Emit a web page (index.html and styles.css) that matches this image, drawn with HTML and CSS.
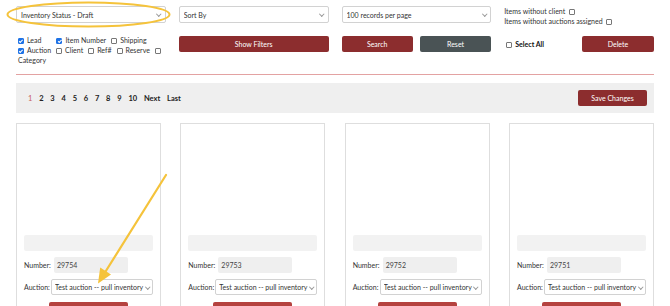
FILE: index.html
```html
<!DOCTYPE html>
<html lang="en">
<head>
<meta charset="utf-8">
<title>Inventory</title>
<link rel="stylesheet" href="styles.css">
</head>
<body>
<div class="page">
  <div class="filters">
    <div class="sel"><select><option>Inventory Status - Draft</option></select></div>
    <div class="sel"><select><option>Sort By</option></select></div>
    <div class="sel"><select><option>100 records per page</option></select></div>
    <div class="flags">
      <label class="flag">Items without client <input type="checkbox"></label>
      <label class="flag">Items without auctions assigned <input type="checkbox"></label>
    </div>

    <div class="fields">
      <label class="fld wide"><input type="checkbox" checked>Lead</label><label class="fld"><input type="checkbox" checked>Item Number</label><label class="fld"><input type="checkbox">Shipping</label>
      <label class="fld"><input type="checkbox" checked>Auction</label><label class="fld"><input type="checkbox">Client</label><label class="fld"><input type="checkbox">Ref#</label><label class="fld"><input type="checkbox">Reserve</label><label class="fld"><input type="checkbox">Category</label>
    </div>
    <div class="btnrow"><button class="btn red full">Show Filters</button></div>
    <div class="btnrow two"><button class="btn red">Search</button><button class="btn dark">Reset</button></div>
    <div class="btnrow split">
      <label class="selall"><input type="checkbox">Select All</label>
      <button class="btn red del">Delete</button>
    </div>
  </div>

  <hr class="rule">

  <div class="pager">
    <nav class="pages">
      <a class="cur">1</a><a>2</a><a>3</a><a>4</a><a>5</a><a>6</a><a>7</a><a>8</a><a>9</a><a>10</a><a>Next</a><a>Last</a>
    </nav>
    <button class="btn red save">Save Changes</button>
  </div>

  <div class="cards">
    <div class="card">
      <div class="photo"></div>
      <div class="caption"></div>
      <div class="row"><span class="lbl num">Number:</span><span class="numbox">29754</span></div>
      <div class="row"><span class="lbl auc">Auction:</span><div class="sel small"><select><option>Test auction -- pull inventory</option></select></div></div>
      <div class="cardbtn"><button class="btn lred"></button></div>
    </div>
    <div class="card">
      <div class="photo"></div>
      <div class="caption"></div>
      <div class="row"><span class="lbl num">Number:</span><span class="numbox">29753</span></div>
      <div class="row"><span class="lbl auc">Auction:</span><div class="sel small"><select><option>Test auction -- pull inventory</option></select></div></div>
      <div class="cardbtn"><button class="btn lred"></button></div>
    </div>
    <div class="card">
      <div class="photo"></div>
      <div class="caption"></div>
      <div class="row"><span class="lbl num">Number:</span><span class="numbox">29752</span></div>
      <div class="row"><span class="lbl auc">Auction:</span><div class="sel small"><select><option>Test auction -- pull inventory</option></select></div></div>
      <div class="cardbtn"><button class="btn lred"></button></div>
    </div>
    <div class="card">
      <div class="photo"></div>
      <div class="caption"></div>
      <div class="row"><span class="lbl num">Number:</span><span class="numbox">29751</span></div>
      <div class="row"><span class="lbl auc">Auction:</span><div class="sel small"><select><option>Test auction -- pull inventory</option></select></div></div>
      <div class="cardbtn"><button class="btn lred"></button></div>
    </div>
  </div>

  <svg class="annot" width="670" height="306" viewBox="0 0 670 306">
    <ellipse cx="88.5" cy="14.5" rx="81" ry="12" fill="none" stroke="#f5c33b" stroke-width="2"/>
    <line x1="166" y1="175" x2="104" y2="274" stroke="#f5c33b" stroke-width="2.2" stroke-linecap="round"/>
    <polygon points="98,283.5 111,274.5 100.2,267.5" fill="#f5c33b"/>
  </svg>
</div>
</body>
</html>
```

FILE: styles.css
```css
html, body {
  margin: 0;
  padding: 0;
  overflow: hidden;
  background: #fff;
}
body {
  font-family: Lato, "Liberation Sans", sans-serif;
  font-size: 7px;
  color: #333;
}
.page {
  position: relative;
  width: 670px;
  height: 306px;
  padding: 6px 16px 0;
  box-sizing: border-box;
}
.filters {
  display: grid;
  grid-template-columns: repeat(4, 1fr);
  grid-template-rows: 20px 30px;
  column-gap: 13px;
  row-gap: 9px;
}
.sel {
  position: relative;
  align-self: start;
}
.sel select {
  appearance: none;
  -webkit-appearance: none;
  display: block;
  width: 100%;
  height: 17px;
  margin: 0;
  padding: 0 8px 0 4px;
  border: 1px solid #d2d2d2;
  border-radius: 2px;
  background: #fff;
  font-family: inherit;
  font-size: 7px;
  color: #333;
  box-sizing: border-box;
}
.sel::after {
  content: "";
  position: absolute;
  right: 5px;
  top: 6px;
  width: 2.5px;
  height: 2.5px;
  border-right: 1px solid #999;
  border-bottom: 1px solid #999;
  transform: rotate(45deg);
}
.sel.small {
  flex: 1;
  align-self: center;
}
.sel.small select {
  height: 16px;
  padding: 0 6px 0 3px;
}
.sel.small::after {
  top: 5.5px;
  right: 4px;
}
input[type=checkbox] {
  appearance: none;
  -webkit-appearance: none;
  position: relative;
  width: 6px;
  height: 6px;
  margin: 0;
  border: 1px solid #777;
  border-radius: 1px;
  background: #fff;
  vertical-align: -0.5px;
  box-sizing: border-box;
}
input[type=checkbox]:checked {
  background: #1f73e6;
  border-color: #1f73e6;
}
input[type=checkbox]:checked::after {
  content: "";
  position: absolute;
  left: 1.3px;
  top: 0;
  width: 1.3px;
  height: 2.6px;
  border-right: 1px solid #fff;
  border-bottom: 1px solid #fff;
  transform: rotate(45deg);
}
.flags {
  display: flex;
  flex-direction: column;
  line-height: 10px;
}
.flag input {
  margin-left: 2px;
}
.fields {
  line-height: 10px;
  padding-left: 2px;
}
.fld {
  white-space: nowrap;
  margin-right: 5px;
}
.fld input {
  margin-right: 3px;
}
.fld.wide {
  margin-right: 15px;
}
.fields .fld:last-child {
  white-space: normal;
}
.btnrow {
  display: flex;
  align-items: flex-start;
  padding-top: 1px;
}
.btnrow.two {
  gap: 7px;
}
.btnrow.two .btn {
  flex: 1;
}
.btnrow.split {
  justify-content: space-between;
}
.btn {
  display: block;
  height: 16px;
  margin: 0;
  padding: 0;
  border: none;
  border-radius: 2px;
  font-family: inherit;
  font-size: 7px;
  color: #fff;
  cursor: pointer;
}
.btn.full {
  width: 100%;
}
.red {
  background: #8c2d2e;
}
.dark {
  background: #4a5355;
}
.lred {
  background: #b5423f;
}
.selall {
  font-weight: 700;
  color: #111;
  line-height: 16px;
  padding-left: 2px;
}
.selall input {
  margin-right: 3px;
}
.del {
  width: 72px;
}
.rule {
  margin: 9px 0 0;
  border: none;
  border-top: 1px solid #e3a2a2;
  height: 0;
}
.pager {
  margin-top: 8px;
  height: 30px;
  background: #efefef;
  display: flex;
  align-items: center;
  justify-content: space-between;
  padding: 0 7px 0 12px;
}
.pages {
  display: flex;
  gap: 6.8px;
  font-weight: 700;
  font-size: 7.5px;
  color: #222;
}
.pages .cur {
  color: #c8605c;
  font-weight: 400;
}
.save {
  width: 69px;
}
.cards {
  margin-top: 10px;
  display: grid;
  grid-template-columns: repeat(4, 1fr);
  column-gap: 19.33px;
}
.card {
  border: 1px solid #dedede;
  padding: 7px 7px 0 7px;
  height: 200px;
  box-sizing: border-box;
}
.photo {
  height: 104px;
}
.caption {
  height: 16px;
  background: #f2f2f2;
  border-radius: 2px;
}
.row {
  display: flex;
  align-items: center;
  margin-top: 6px;
  height: 16px;
}
.lbl {
  color: #333;
}
.lbl.num {
  width: 30px;
}
.lbl.auc {
  width: 27px;
}
.numbox {
  width: 74px;
  height: 16px;
  line-height: 16px;
  background: #efefef;
  border-radius: 2px;
  padding-left: 3px;
  box-sizing: border-box;
  color: #444;
}
.cardbtn {
  margin-top: 7px;
  display: flex;
  justify-content: center;
}
.cardbtn .btn {
  width: 79px;
}
.annot {
  position: absolute;
  left: 0;
  top: 0;
  pointer-events: none;
}
```
